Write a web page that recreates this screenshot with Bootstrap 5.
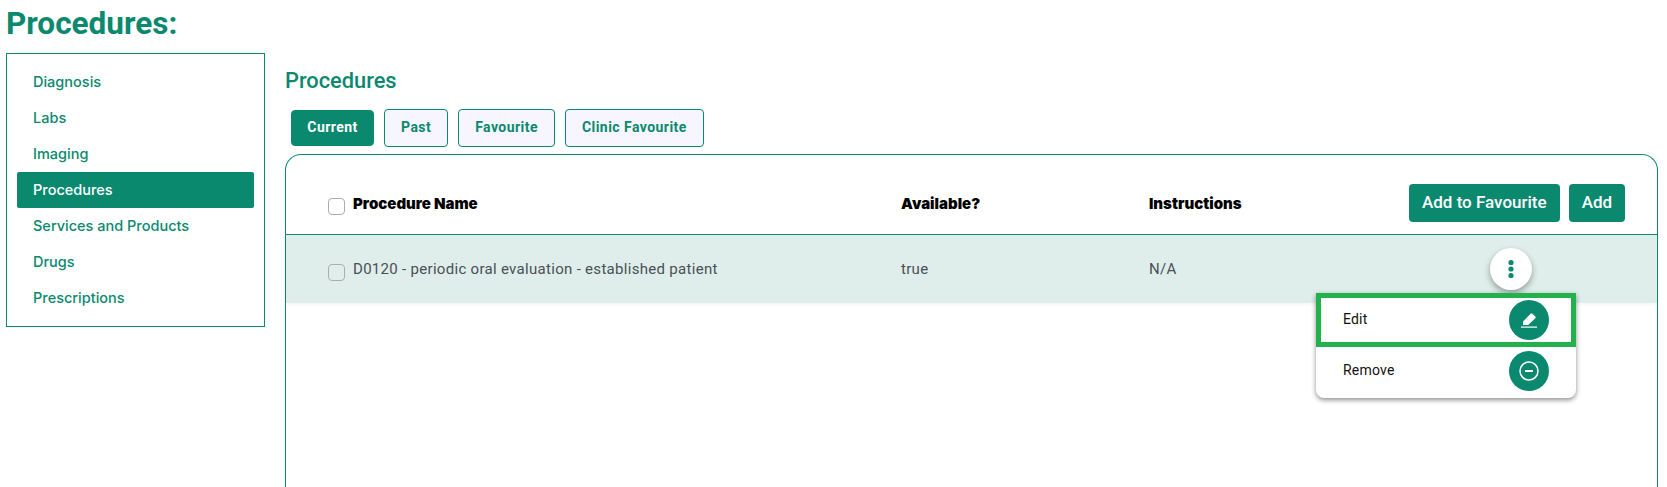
<!DOCTYPE html>
<html lang="en">
<head>
  <meta charset="UTF-8" />
  <meta name="viewport" content="width=device-width, initial-scale=1.0" />
  <title>Procedures</title>
  <link href="https://cdn.jsdelivr.net/npm/bootstrap@5.3.3/dist/css/bootstrap.min.css" rel="stylesheet"/>
  <style>
    html, body { height: 487px; overflow: hidden; }
    body { font-family: Roboto, sans-serif; background: #fff; color: #0a896e; }
    .page-title { font-size: 31.5px; font-weight: 700; line-height: 36px; margin: 6px 0 11px 6px; color: #0a896e; }
    .layout { padding-left: 6px; gap: 20px; }
    .side-box { width: 259px; height: 274px; flex: none; border: 1px solid #0a896e; padding: 10px; }
    .side-link { display: block; height: 36px; line-height: 36px; padding-left: 16px; font-family: Inter, sans-serif; font-size: 14.5px; font-weight: 500; color: #0a896e; text-decoration: none; border-radius: 2px; }
    .side-link.active { background: #0a896e; color: #fff; }
    .main-col { width: 1373px; flex: none; }
    .sub-title { font-size: 21.8px; font-weight: 500; line-height: 26px; margin: 15px 0 15px; color: #0a896e; }
    .tabs { padding-left: 6px; gap: 10px; height: 38px; align-items: center; margin-bottom: 7px; }
    .tab-btn { height: 38px; padding: 0 16px 2px; font-size: 14px; font-weight: 700; letter-spacing: .45px; color: #0a896e; background: #f7f5ff; border: 1px solid #0a896e; border-radius: 4px; }
    .tab-btn.active { height: 36px; width: 83px; padding: 0 0 2px; background: #0a896e; color: #fff; border-color: #0a896e; }
    .list-box { height: 400px; border: 1px solid #0a896e; border-bottom: 0; border-radius: 16px 16px 0 0; position: relative; }
    .list-head { height: 80px; border-bottom: 1px solid #0a896e; align-items: center; padding-top: 17px; }
    .list-row { height: 68px; background: #dfeeea; align-items: center; box-shadow: 0 2px 3px rgba(0,0,0,.03); }
    .col-name { width: 615px; padding-left: 42px; flex: none; }
    .col-avail { width: 248px; flex: none; }
    .col-instr { width: 180px; flex: none; }
    .list-head .cell-text { font-family: Inter, sans-serif; font-size: 15px; font-weight: 900; color: #000; position: relative; top: 1px; }
    .list-row .cell-text { font-size: 15px; letter-spacing: .3px; color: #4b4f58; }
    .tick { width: 17px; height: 17px; margin: 0 8px 0 0; border: 1px solid #adadad; border-radius: 4px; background: #fff; flex: none; position: relative; top: 3px; }
    .list-row .tick { background: transparent; }
    .head-actions { gap: 9px; margin-left: 80px; }
    .act-btn { height: 38px; padding: 0 13px; font-size: 17px; font-weight: 500; background: #0a896e; border: 0; color: #fff; border-radius: 4px; }
    .kebab { width: 42px; height: 42px; background: #fff; border-radius: 50%; box-shadow: 0 3px 6px rgba(0,0,0,.35); margin-left: 161px; }
    .kebab svg { display: block; }
    .row-menu { position: absolute; left: 1030px; top: 138px; width: 260px; padding-bottom: 2px; background: #fff; border-radius: 0 0 8px 8px; box-shadow: 0 2px 5px rgba(0,0,0,.45); }
    .menu-line { height: 50px; margin-top: -1px; padding: 0 27px 0 27px; font-size: 14px; letter-spacing: .2px; color: #111; }
    .menu-line.picked { height: 54px; margin-top: 0; padding: 0 22px 0 22px; border: 5px solid #22b14c; }
    .menu-label { padding-bottom: 2px; }
    .round-ico { width: 40px; height: 40px; border-radius: 50%; background: #0a896e; }
  </style>
</head>
<body>
  <h1 class="page-title">Procedures:</h1>
  <div class="d-flex layout">
    <nav class="side-box">
      <a class="side-link" href="#">Diagnosis</a>
      <a class="side-link" href="#">Labs</a>
      <a class="side-link" href="#">Imaging</a>
      <a class="side-link active" href="#">Procedures</a>
      <a class="side-link" href="#">Services and Products</a>
      <a class="side-link" href="#">Drugs</a>
      <a class="side-link" href="#">Prescriptions</a>
    </nav>
    <main class="main-col">
      <h2 class="sub-title">Procedures</h2>
      <div class="d-flex tabs">
        <button class="btn tab-btn active">Current</button>
        <button class="btn tab-btn">Past</button>
        <button class="btn tab-btn">Favourite</button>
        <button class="btn tab-btn">Clinic Favourite</button>
      </div>
      <div class="list-box">
        <div class="d-flex list-head">
          <div class="col-name d-flex align-items-center"><input class="form-check-input tick" type="checkbox" /><span class="cell-text">Procedure Name</span></div>
          <div class="col-avail"><span class="cell-text">Available?</span></div>
          <div class="col-instr"><span class="cell-text">Instructions</span></div>
          <div class="d-flex head-actions">
            <button class="btn act-btn">Add to Favourite</button>
            <button class="btn act-btn">Add</button>
          </div>
        </div>
        <div class="d-flex list-row">
          <div class="col-name d-flex align-items-center"><input class="form-check-input tick" type="checkbox" /><span class="cell-text">D0120 - periodic oral evaluation - established patient</span></div>
          <div class="col-avail"><span class="cell-text">true</span></div>
          <div class="col-instr"><span class="cell-text">N/A</span></div>
          <div class="kebab d-flex align-items-center justify-content-center">
            <svg width="10" height="20" viewBox="0 0 10 20" fill="#0a896e"><circle cx="5" cy="3.5" r="2.6"/><circle cx="5" cy="10" r="2.6"/><circle cx="5" cy="16.5" r="2.6"/></svg>
          </div>
        </div>
        <div class="row-menu">
          <div class="d-flex align-items-center justify-content-between menu-line picked">
            <span class="menu-label">Edit</span>
            <span class="round-ico d-flex align-items-center justify-content-center">
              <svg width="20" height="20" viewBox="0 0 20 20" fill="#fff"><path d="M4 15v-3.6l7.6-7.6c.5-.5 1.3-.5 1.8 0l2.9 2.7c.5.5.5 1.3 0 1.8L9.2 15z"/><rect x="2" y="16.5" width="16" height="1.2"/></svg>
            </span>
          </div>
          <div class="d-flex align-items-center justify-content-between menu-line">
            <span class="menu-label">Remove</span>
            <span class="round-ico d-flex align-items-center justify-content-center">
              <svg width="22" height="22" viewBox="0 0 22 22" fill="none" stroke="#fff"><circle cx="11" cy="11" r="9" stroke-width="1.5"/><path d="M7 11h8" stroke-width="2"/></svg>
            </span>
          </div>
        </div>
      </div>
    </main>
  </div>
  <script src="https://cdn.jsdelivr.net/npm/bootstrap@5.3.3/dist/js/bootstrap.bundle.min.js"></script>
</body>
</html>
